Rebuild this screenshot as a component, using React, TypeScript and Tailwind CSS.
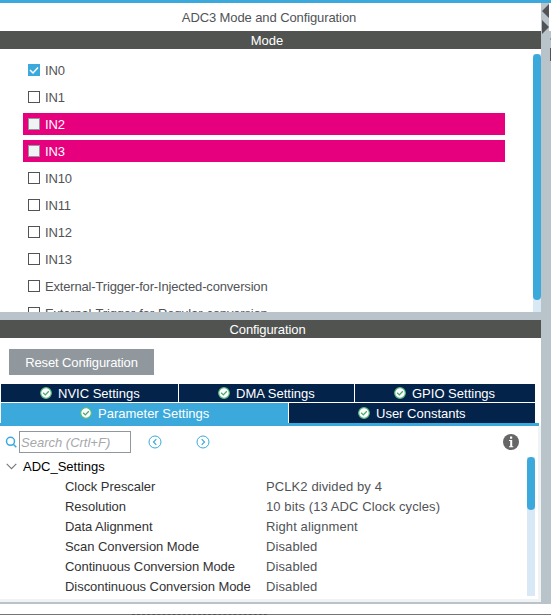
import type { ReactNode } from "react";

function Check() {
  return (
    <svg width="12" height="12" viewBox="0 0 12 12" className="shrink-0">
      <circle cx="6" cy="6" r="5.3" fill="#fff" stroke="#5dba81" strokeWidth="1.2" />
      <path d="M3.2 5.8 L5.3 7.9 L8.8 4.2" fill="none" stroke="#45ab6d" strokeWidth="1.3" />
    </svg>
  );
}

type Channel = { label: string; state?: "on" | "off" | "conflict" };

function ChannelRow({ label, state = "off" }: Channel) {
  const conflict = state === "conflict";
  return (
    <div className={`mb-[5px] flex h-[22px] w-[482px] shrink-0 items-center pl-[5px] ${conflict ? "bg-[#e6007e] text-white" : "text-[#515357]"}`}>
      <span
        className={`flex size-3 shrink-0 items-center justify-center border ${
          state === "on" ? "border-[#3ba9dc] bg-[#3ba9dc]" : conflict ? "border-[#90989e] bg-[#f0f2f3]" : "border-[#515357] bg-white"
        }`}
      >
        {state === "on" && (
          <svg width="10" height="10" viewBox="0 0 10 10" className="shrink-0">
            <path d="M1 5 L4 8 L9 2.5" fill="none" stroke="#fff" strokeWidth="1.5" />
          </svg>
        )}
      </span>
      <span className="ml-[5px] whitespace-nowrap pt-[2px] tracking-[-0.17px]">{label}</span>
    </div>
  );
}

function Tab({ children, className }: { children: ReactNode; className: string }) {
  return (
    <div className={`flex shrink-0 items-center text-white ${className}`}>
      <Check />
      <span className="ml-[6px] whitespace-nowrap pt-[2px]">{children}</span>
    </div>
  );
}

function StepButton({ d }: { d: string }) {
  return (
    <svg width="14" height="14" viewBox="0 0 14 14" fill="none" stroke="#3ba9dc" className="shrink-0">
      <circle cx="7" cy="7" r="6" />
      <path d={d} strokeWidth="1.2" />
    </svg>
  );
}

const channels: Channel[] = [
  { label: "IN0", state: "on" },
  { label: "IN1" },
  { label: "IN2", state: "conflict" },
  { label: "IN3", state: "conflict" },
  { label: "IN10" },
  { label: "IN11" },
  { label: "IN12" },
  { label: "IN13" },
  { label: "External-Trigger-for-Injected-conversion" },
  { label: "External-Trigger-for-Regular-conversion" },
];

const settings = [
  ["Clock Prescaler", "PCLK2 divided by 4"],
  ["Resolution", "10 bits (13 ADC Clock cycles)"],
  ["Data Alignment", "Right alignment"],
  ["Scan Conversion Mode", "Disabled"],
  ["Continuous Conversion Mode", "Disabled"],
  ["Discontinuous Conversion Mode", "Disabled"],
];

export default function App() {
  return (
    <div className="flex h-[615px] w-[551px] flex-col overflow-hidden bg-white font-['Liberation_Sans',Arial,sans-serif] text-[13px] leading-[18px] text-[#515357]">
      <div className="h-[3px] shrink-0 bg-[#3ba9dc]" />
      <div className="flex h-[601px] shrink-0">
        <main className="flex w-[541px] shrink-0 flex-col">
          <header className="flex h-7 shrink-0 items-center justify-center pr-[3px] pt-[2px] tracking-[-0.1px]">ADC3 Mode and Configuration</header>
          <h2 className="flex h-[18px] shrink-0 items-center justify-center bg-[#515351] pr-[7px] pt-[2px] text-white">Mode</h2>
          <section className="flex h-[263px] shrink-0 justify-between overflow-hidden">
            <div className="flex flex-col pl-[23px] pt-[10px]">
              {channels.map((c) => (
                <ChannelRow key={c.label} {...c} />
              ))}
            </div>
            <div className="mt-[5px] h-[258px] w-2 bg-[#d9e8f5]">
              <div className="h-[246px] rounded-full bg-[#3ba9dc]" />
            </div>
          </section>
          <div className="h-2 shrink-0 bg-[#b9c4ca]" />
          <h2 className="flex h-[18px] shrink-0 items-center justify-center bg-[#515351] pr-[6px] pt-[2px] tracking-[-0.1px] text-white">Configuration</h2>
          <section className="flex h-[266px] shrink-0 flex-col">
            <button className="ml-[9px] mt-[11px] flex h-[26px] w-[145px] shrink-0 items-center justify-center bg-[#90989e] pt-[2px] tracking-[-0.12px] text-white">
              Reset Configuration
            </button>
            <nav className="mt-[9px] flex shrink-0 flex-col gap-px">
              <div className="flex h-[18px] gap-px pl-px">
                <Tab className="w-[177px] bg-[#03234b] pl-[39px]">NVIC Settings</Tab>
                <Tab className="w-[175px] bg-[#03234b] pl-[39px]">DMA Settings</Tab>
                <Tab className="w-[180px] bg-[#03234b] pl-[39px]">GPIO Settings</Tab>
              </div>
              <div className="flex h-5 gap-px pl-px">
                <Tab className="w-[287px] bg-[#3ba9dc] pl-[79px]">Parameter Settings</Tab>
                <Tab className="w-[246px] bg-[#03234b] pl-[69px]">User Constants</Tab>
              </div>
            </nav>
            <div className="mr-[2px] h-[3px] shrink-0 bg-[#3ba9dc]" />
            <div className="flex h-[176px] shrink-0 flex-col border-b-[3px] border-r-[3px] border-[#f0f2f3]">
              <div className="flex h-[31px] shrink-0 items-center pl-[5px] pt-px">
                <svg width="12" height="12" viewBox="0 0 12 12" fill="none" stroke="#3ba9dc" strokeWidth="1.5" className="shrink-0">
                  <circle cx="5.5" cy="5.3" r="4" />
                  <path d="M8.3 8.3 L11.3 11.3" />
                </svg>
                <div className="ml-[2px] flex h-[22px] w-28 shrink-0 items-center border border-[#90989e] pl-px pt-[2px] italic text-[#a6a8aa]">Search (Crtl+F)</div>
                <div className="ml-[17px] flex gap-[34px]">
                  <StepButton d="M8.3 4.2 L5.5 7 L8.3 9.8" />
                  <StepButton d="M5.7 4.2 L8.5 7 L5.7 9.8" />
                </div>
                <svg width="16" height="16" viewBox="0 0 16 16" className="ml-auto mr-[19px] shrink-0">
                  <circle cx="8" cy="8" r="8" fill="#666" />
                  <path d="M7 2.5h2.2v2.2H7zM6 6h3.2v6.3H10.3v1H6v-1h1.2V7H6z" fill="#fff" />
                </svg>
              </div>
              <div className="flex h-[142px] justify-between">
                <div className="w-[520px] shrink-0 text-[#333]">
                  <div className="flex h-[19px] items-center pl-[6px] text-black">
                    <svg width="11" height="7" viewBox="0 0 11 7" fill="none" stroke="#777" strokeWidth="1.1">
                      <path d="M.7 .9 L5.5 5.7 L10.3 .9" />
                    </svg>
                    <span className="ml-[6px]">ADC_Settings</span>
                  </div>
                  {settings.map(([name, value]) => (
                    <div key={name} className="flex h-5 items-center pt-[2px]">
                      <span className="ml-[65px] w-[201px] shrink-0 whitespace-nowrap tracking-[-0.05px]">{name}</span>
                      <span className="tracking-[0.1px] text-[#515357]">{value}</span>
                    </div>
                  ))}
                </div>
                <div className="mr-[3px] h-[139px] w-2 bg-[#d9e8f5]">
                  <div className="h-[53px] rounded-full bg-[#3ba9dc]" />
                </div>
              </div>
            </div>
            <div className="h-[2px] shrink-0 bg-[#b9c4ca]" />
          </section>
        </main>
        <aside className="flex w-[10px] flex-col bg-[#b9c4ca]">
          <div className="flex h-7 w-full shrink-0 justify-between">
            <svg width="8" height="32" viewBox="0 0 8 32" className="shrink-0">
              <path d="M8 1 V15 L1 8Z M1 17 V31 L8 24Z" fill="#515357" />
            </svg>
            <div className="h-7 w-[2px] bg-white" />
          </div>
          <div className="ml-auto mt-[7px] h-[2px] w-px bg-[#90989e]" />
          <div className="ml-auto mt-[8px] h-[13px] w-px bg-[#515357]" />
        </aside>
      </div>
      <div className="mt-auto flex h-px shrink-0 bg-[#737577] pl-[132px]">
        <div className="w-[135px] border-t border-dashed border-[#505254]" />
      </div>
    </div>
  );
}
